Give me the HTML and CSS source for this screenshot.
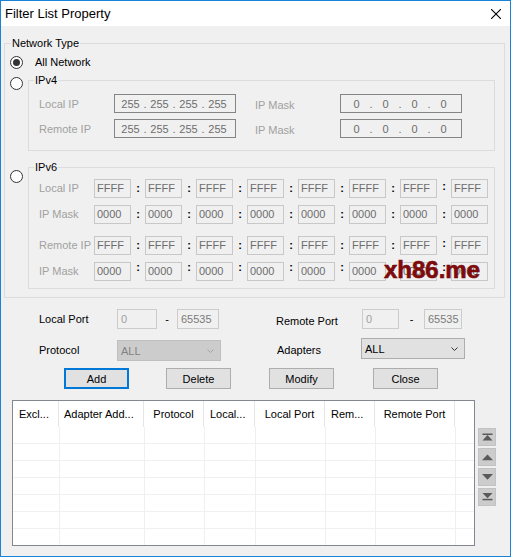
FILE: index.html
```html
<!DOCTYPE html>
<html>
<head>
<meta charset="utf-8">
<link rel="stylesheet" href="styles.css">
</head>
<body>
<div class="window">
  <div class="titlebar">
    <span class="title">Filter List Property</span>
    <svg class="close" width="10" height="10" viewBox="0 0 10 10"><path d="M0 0L10 10M10 0L0 10" stroke="#000" stroke-width="1.1" fill="none"/></svg>
  </div>
  <div class="content">
    <div class="group outer">
      <div class="legend">Network Type</div>
      <div class="all-row"><span class="radio checked"></span><span class="rtext">All Network</span></div>

      <div class="opt-row v4">
        <span class="radio"></span>
        <div class="group sub v4-group">
          <div class="legend">IPv4</div>
          <div class="v4-row r1">
            <span class="dis w75">Local IP</span>
            <div class="ipbox"><span class="f">255</span><span class="d">.</span><span class="f">255</span><span class="d">.</span><span class="f">255</span><span class="d">.</span><span class="f">255</span></div>
            <span class="dis mask-lbl">IP Mask</span>
            <div class="ipbox"><span class="f">0</span><span class="d">.</span><span class="f">0</span><span class="d">.</span><span class="f">0</span><span class="d">.</span><span class="f">0</span></div>
          </div>
          <div class="v4-row r2">
            <span class="dis w75">Remote IP</span>
            <div class="ipbox"><span class="f">255</span><span class="d">.</span><span class="f">255</span><span class="d">.</span><span class="f">255</span><span class="d">.</span><span class="f">255</span></div>
            <span class="dis mask-lbl">IP Mask</span>
            <div class="ipbox"><span class="f">0</span><span class="d">.</span><span class="f">0</span><span class="d">.</span><span class="f">0</span><span class="d">.</span><span class="f">0</span></div>
          </div>
        </div>
      </div>

      <div class="opt-row v6">
        <span class="radio"></span>
        <div class="group sub v6-group">
          <div class="legend">IPv6</div>
          <div class="v6-row r1">
            <span class="dis v6-lbl">Local IP</span>
            <div class="v6-boxes">
              <span class="hex">FFFF</span><span class="colon">:</span><span class="hex">FFFF</span><span class="colon">:</span><span class="hex">FFFF</span><span class="colon">:</span><span class="hex">FFFF</span><span class="colon">:</span><span class="hex">FFFF</span><span class="colon">:</span><span class="hex">FFFF</span><span class="colon">:</span><span class="hex">FFFF</span><span class="colon up">:</span><span class="hex">FFFF</span>
            </div>
          </div>
          <div class="v6-row r2">
            <span class="dis v6-lbl">IP Mask</span>
            <div class="v6-boxes">
              <span class="hex">0000</span><span class="colon">:</span><span class="hex">0000</span><span class="colon">:</span><span class="hex">0000</span><span class="colon">:</span><span class="hex">0000</span><span class="colon">:</span><span class="hex">0000</span><span class="colon">:</span><span class="hex">0000</span><span class="colon">:</span><span class="hex">0000</span><span class="colon">:</span><span class="hex">0000</span>
            </div>
          </div>
          <div class="v6-row r3">
            <span class="dis v6-lbl">Remote IP</span>
            <div class="v6-boxes">
              <span class="hex">FFFF</span><span class="colon">:</span><span class="hex">FFFF</span><span class="colon">:</span><span class="hex">FFFF</span><span class="colon">:</span><span class="hex">FFFF</span><span class="colon">:</span><span class="hex">FFFF</span><span class="colon">:</span><span class="hex">FFFF</span><span class="colon">:</span><span class="hex">FFFF</span><span class="colon up">:</span><span class="hex">FFFF</span>
            </div>
          </div>
          <div class="v6-row r4">
            <span class="dis v6-lbl">IP Mask</span>
            <div class="v6-boxes">
              <span class="hex">0000</span><span class="colon up2">:</span><span class="hex">0000</span><span class="colon up2">:</span><span class="hex">0000</span><span class="colon up2">:</span><span class="hex">0000</span><span class="colon up2">:</span><span class="hex">0000</span><span class="colon up2">:</span><span class="hex">0000</span><span class="colon up2">:</span><span class="hex">0000</span><span class="colon up2">:</span><span class="hex">0000</span>
            </div>
          </div>
        </div>
      </div>
    </div>

    <div class="ports">
      <div class="prow1">
        <span class="plbl-l">Local Port</span>
        <span class="pbox pw40 light">0</span>
        <span class="dash dash1">-</span>
        <span class="pbox pw42">65535</span>
        <span class="plbl-r">Remote Port</span>
        <span class="pbox pw37 light">0</span>
        <span class="dash dash2">-</span>
        <span class="pbox pw38">65535</span>
      </div>
      <div class="prow2">
        <span class="lbl-proto">Protocol</span>
        <div class="combo dis-combo"><span>ALL</span><svg class="chev" width="7" height="4" viewBox="0 0 7 4"><path d="M0.5 0.5L3.5 3.5L6.5 0.5" stroke="#a6a6a6" fill="none"/></svg></div>
        <span class="lbl-adapt">Adapters</span>
        <div class="combo en-combo"><span>ALL</span><svg class="chev" width="7" height="4" viewBox="0 0 7 4"><path d="M0.5 0.5L3.5 3.5L6.5 0.5" stroke="#333" fill="none"/></svg></div>
      </div>
      <div class="prow3">
        <div class="btn def">Add</div>
        <div class="btn b-del">Delete</div>
        <div class="btn b-mod">Modify</div>
        <div class="btn b-close">Close</div>
      </div>
    </div>

    <div class="bottom">
      <div class="list">
        <div class="lhead">
          <div class="c w1">Excl...</div>
          <div class="c w2 p5">Adapter Add...</div>
          <div class="c w3 ctr">Protocol</div>
          <div class="c w4">Local...</div>
          <div class="c w5 ctr">Local Port</div>
          <div class="c w6">Rem...</div>
          <div class="c w7 ctr">Remote Port</div>
        </div>
        <div class="lrow"><div class="b b1"></div><div class="b w2"></div><div class="b w3"></div><div class="b w4"></div><div class="b w5"></div><div class="b w6"></div><div class="b w7"></div></div>
        <div class="lrow"><div class="b b1"></div><div class="b w2"></div><div class="b w3"></div><div class="b w4"></div><div class="b w5"></div><div class="b w6"></div><div class="b w7"></div></div>
        <div class="lrow"><div class="b b1"></div><div class="b w2"></div><div class="b w3"></div><div class="b w4"></div><div class="b w5"></div><div class="b w6"></div><div class="b w7"></div></div>
        <div class="lrow"><div class="b b1"></div><div class="b w2"></div><div class="b w3"></div><div class="b w4"></div><div class="b w5"></div><div class="b w6"></div><div class="b w7"></div></div>
        <div class="lrow"><div class="b b1"></div><div class="b w2"></div><div class="b w3"></div><div class="b w4"></div><div class="b w5"></div><div class="b w6"></div><div class="b w7"></div></div>
        <div class="lrow"><div class="b b1"></div><div class="b w2"></div><div class="b w3"></div><div class="b w4"></div><div class="b w5"></div><div class="b w6"></div><div class="b w7"></div></div>
        <div class="lrow"><div class="b b1"></div><div class="b w2"></div><div class="b w3"></div><div class="b w4"></div><div class="b w5"></div><div class="b w6"></div><div class="b w7"></div></div>
      </div>
      <div class="scroll">
        <div class="sbtn"><svg width="16" height="16" viewBox="0 0 16 16"><rect x="3.5" y="4.5" width="10" height="1.5" fill="#5a5a5a"/><polygon points="8.5,6 13.5,11.5 3.5,11.5" fill="#5a5a5a"/></svg></div>
        <div class="sbtn"><svg width="16" height="16" viewBox="0 0 16 16"><polygon points="8.5,5.6 14,11.3 3,11.3" fill="#5a5a5a"/></svg></div>
        <div class="sbtn"><svg width="16" height="16" viewBox="0 0 16 16"><polygon points="3,5.1 14,5.1 8.5,10.8" fill="#5a5a5a"/></svg></div>
        <div class="sbtn"><svg width="16" height="16" viewBox="0 0 16 16"><polygon points="3.5,4 13.5,4 8.5,9.2" fill="#5a5a5a"/><rect x="3.5" y="9.8" width="10" height="1.5" fill="#5a5a5a"/></svg></div>
      </div>
    </div>
  </div>
  <div class="wm">xh86.me</div>
</div>
</body>
</html>
```
FILE: styles.css
```css
* { box-sizing: border-box; }
body { margin: 0; background: #fff; }
.window {
  width: 511px; height: 557px;
  border: 1px solid #1883d7;
  background: #f0f0f0;
  font-family: "Liberation Sans", Arial, sans-serif;
  font-size: 11px;
  color: #000;
  position: relative;
  overflow: hidden;
}
.titlebar {
  height: 25px; background: #fff;
  display: flex; align-items: center;
  padding-left: 4px; padding-right: 9px;
}
.title { font-size: 13px; }
.close { margin-left: auto; }

.group { border: 1px solid #dcdcdc; }
.outer { margin: 17px 0 0 3px; width: 501px; padding-bottom: 8px; }
.legend {
  width: fit-content; margin-top: -8px; line-height: 14px;
  padding: 0 1px; background: #f0f0f0;
}
.outer > .legend { margin-left: 6px; }
.sub > .legend { margin-left: 5px; }

.all-row { display: flex; align-items: center; height: 13px; margin-top: 6px; }
.rtext { margin-left: 12px; line-height: 13px; }
.radio {
  width: 13px; height: 13px; flex: none;
  border: 1px solid #333; border-radius: 50%;
  background: #fff; margin-left: 5px;
  display: flex; align-items: center; justify-content: center;
}
.radio.checked::after {
  content: ""; width: 7px; height: 7px; border-radius: 50%; background: #333;
}
.opt-row { display: flex; align-items: flex-start; }
.opt-row.v4 { margin-top: 11px; }
.opt-row.v4 .radio { margin-top: -3px; }
.opt-row.v6 { margin-top: 16px; }
.opt-row.v6 .radio { margin-top: 3px; }
.sub { width: 467px; margin-left: 5px; }

.dis { color: #a0a0a0; }
.v4-group { padding-bottom: 12px; }
.v4-row { display: flex; align-items: center; height: 19px; padding-left: 10px; }
.v4-row.r1 { margin-top: 7px; }
.v4-row.r2 { margin-top: 6px; }
.w75 { width: 75px; }
.mask-lbl { margin-left: 19px; width: 85px; padding-top: 2px; }
.ipbox {
  width: 122px; height: 19px; border: 1px solid #858585;
  display: flex; align-items: center; padding: 0 5px 0 3px;
  color: #6d6d6d;
}
.ipbox .f { width: 25px; text-align: center; }
.ipbox .d { width: 4px; text-align: center; }

.v6-group { padding-bottom: 7px; }
.v6-row { display: flex; align-items: center; height: 19px; padding-left: 10px; }
.v6-row.r1 { margin-top: 5px; }
.v6-row.r2 { margin-top: 7px; }
.v6-row.r3 { margin-top: 12px; }
.v6-row.r4 { margin-top: 7px; }
.v6-lbl { width: 55px; white-space: nowrap; padding-bottom: 2px; }
.v6-boxes { display: flex; align-items: center; height: 19px; width: 394px; }
.hex {
  width: 37px; height: 19px; border: 1px solid #c8c8c8;
  padding-left: 2px; line-height: 17px; color: #6d6d6d;
}
.colon { width: 14px; text-align: center; font-weight: bold; line-height: 19px; }
.colon.up { padding-bottom: 5px; }
.colon.up2 { padding-bottom: 8px; }

.ports { margin-left: 38px; }
.prow1 { display: flex; align-items: center; height: 20px; margin-top: 11px; }
.plbl-l { width: 78px; }
.plbl-r { margin-left: 57px; width: 86px; padding-top: 3px; }
.pbox {
  height: 20px; border: 1px solid #cccccc; padding-left: 3px;
  line-height: 18px; color: #7a7a7a;
}
.pbox.light { color: #a0a0a0; }
.pw40 { width: 40px; }
.pw42 { width: 42px; }
.pw37 { width: 37px; }
.pw38 { width: 38px; }
.dash { text-align: center; }
.dash1 { width: 20px; }
.dash2 { width: 25px; }

.prow2 { display: flex; align-items: flex-start; margin-top: 9px; }
.lbl-proto { width: 78px; margin-top: 5px; line-height: 14px; }
.lbl-adapt { margin-left: 56px; width: 84px; margin-top: 5px; line-height: 14px; }
.combo {
  width: 104px; height: 21px; border: 1px solid;
  display: flex; align-items: center; padding-left: 3px;
}
.chev { margin-left: auto; margin-right: 6px; }
.dis-combo { margin-top: 2px; background: #cccccc; border-color: #bfbfbf; color: #838383; }
.en-combo { background: #e1e1e1; border-color: #adadad; }

.prow3 { display: flex; margin-top: 7px; padding-left: 25px; }
.btn {
  width: 65px; height: 21px; background: #e1e1e1; border: 1px solid #adadad;
  display: flex; align-items: center; justify-content: center;
}
.btn.def { border: 2px solid #0078d7; }
.b-del { margin-left: 37px; }
.b-mod { margin-left: 38px; }
.b-close { margin-left: 39px; }

.bottom { display: flex; margin: 11px 0 0 11px; }
.list {
  width: 463px; height: 146px; border: 1px solid #828790;
  background: #fff; overflow: hidden;
}
.lhead { display: flex; height: 26px; }
.lhead .c {
  border-right: 1px solid #e5e5e5; line-height: 26px;
  padding-left: 6px; white-space: nowrap; overflow: hidden; flex: none;
}
.lhead .c.p5 { padding-left: 5px; }
.lhead .c.ctr { padding-left: 0; text-align: center; }
.w1 { width: 46px; }
.b1 { width: 47px; }
.w2 { width: 85px; }
.w3 { width: 60px; }
.w4 { width: 51px; }
.w5 { width: 70px; }
.w6 { width: 50px; }
.w7 { width: 80px; }
.lrow { display: flex; height: 17px; border-bottom: 1px solid #f0f0f0; }
.lrow .b { border-right: 1px solid #f0f0f0; flex: none; }

.scroll { margin-left: 3px; padding-top: 28px; display: flex; flex-direction: column; gap: 2px; }
.sbtn {
  width: 18px; height: 18px; background: #cccccc; border: 1px solid #c2c2c2;
}
.sbtn svg { display: block; }

.wm {
  position: absolute; left: 383px; top: 257px;
  font: bold 24px/24px "Liberation Sans", Arial, sans-serif;
  color: #7d0b0b;
  -webkit-text-stroke: 0.6px #7d0b0b;
}
```
